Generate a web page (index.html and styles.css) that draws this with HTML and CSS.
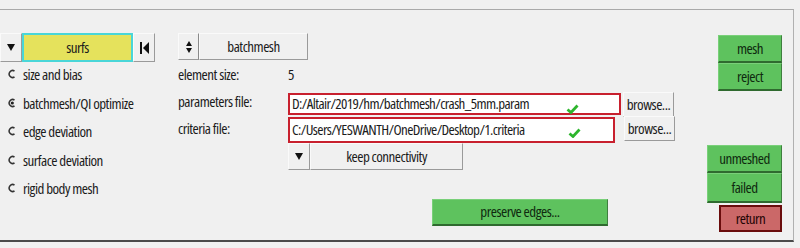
FILE: index.html
```html
<!DOCTYPE html>
<html>
<head>
<meta charset="utf-8">
<link rel="stylesheet" href="styles.css">
</head>
<body>
<div class="panel">
  <div class="col-left">
    <div class="entity-row">
      <button class="btn icon-btn"><svg width="8" height="8" viewBox="0 0 8 8"><polygon points="0,0 8,0 4,7" fill="#111"/></svg></button>
      <div class="entity-field">surfs</div>
      <button class="btn icon-btn"><svg width="9" height="12" viewBox="0 0 9 12"><rect x="0" y="0" width="2" height="12" fill="#111"/><polygon points="9,0 9,12 3,6" fill="#111"/></svg></button>
    </div>
    <ul class="radios">
      <li><span class="radio"><svg width="8" height="10" viewBox="0 0 8 10"><path d="M6.5 2 A3.5 3.5 0 1 0 6.5 8" fill="none" stroke="#333" stroke-width="1.5"/></svg></span>size and bias</li>
      <li><span class="radio"><svg width="8" height="10" viewBox="0 0 8 10"><path d="M6.5 2 A3.5 3.5 0 1 0 6.5 8" fill="none" stroke="#333" stroke-width="1.5"/><circle cx="4.3" cy="5" r="1.6" fill="#222"/></svg></span>batchmesh/QI optimize</li>
      <li><span class="radio"><svg width="8" height="10" viewBox="0 0 8 10"><path d="M6.5 2 A3.5 3.5 0 1 0 6.5 8" fill="none" stroke="#333" stroke-width="1.5"/></svg></span>edge deviation</li>
      <li><span class="radio"><svg width="8" height="10" viewBox="0 0 8 10"><path d="M6.5 2 A3.5 3.5 0 1 0 6.5 8" fill="none" stroke="#333" stroke-width="1.5"/></svg></span>surface deviation</li>
      <li><span class="radio"><svg width="8" height="10" viewBox="0 0 8 10"><path d="M6.5 2 A3.5 3.5 0 1 0 6.5 8" fill="none" stroke="#333" stroke-width="1.5"/></svg></span>rigid body mesh</li>
    </ul>
  </div>

  <div class="col-mid">
    <div class="mode-row">
      <button class="btn updown-btn"><svg width="6" height="12" viewBox="0 0 6 12"><polygon points="0,5 3,0 6,5" fill="#111"/><polygon points="0,7 6,7 3,12" fill="#111"/></svg></button>
      <button class="btn mode-btn">batchmesh</button>
    </div>
    <div class="form">
      <div class="label">element size:</div>
      <div class="value">5</div>
      <div class="label">parameters file:</div>
      <div class="file-row">
        <div class="file-field w1"><span class="path">D:/Altair/2019/hm/batchmesh/crash_5mm.param</span><svg class="check" width="13" height="10" viewBox="0 0 13 10"><path d="M1.5 5.5 L5 8.5 L11.5 1.5" fill="none" stroke="#2db52d" stroke-width="2.8"/></svg></div>
        <button class="btn browse-btn">browse...</button>
      </div>
      <div class="label">criteria file:</div>
      <div class="file-row">
        <div class="file-field w2"><span class="path">C:/Users/YESWANTH/OneDrive/Desktop/1.criteria</span><svg class="check" width="13" height="10" viewBox="0 0 13 10"><path d="M1.5 5.5 L5 8.5 L11.5 1.5" fill="none" stroke="#2db52d" stroke-width="2.8"/></svg></div>
        <button class="btn browse-btn b2">browse...</button>
      </div>
      <div></div>
      <div class="conn-row">
        <button class="btn icon-btn small"><svg width="8" height="8" viewBox="0 0 8 8"><polygon points="0,0 8,0 4,7" fill="#111"/></svg></button>
        <button class="btn conn-btn">keep connectivity</button>
      </div>
      <div></div>
      <div class="preserve-row">
        <button class="gbtn preserve-btn">preserve edges...</button>
      </div>
    </div>
  </div>

  <div class="col-right">
    <button class="gbtn rbtn narrow">mesh</button>
    <button class="gbtn rbtn narrow">reject</button>
    <div class="spacer"></div>
    <button class="gbtn rbtn wide">unmeshed</button>
    <button class="gbtn rbtn wide tall">failed</button>
    <button class="rbtn return-btn">return</button>
  </div>
</div>
</body>
</html>
```

FILE: styles.css
```css
* { box-sizing: border-box; }
html, body {
  margin: 0;
  background: #f0f0f0;
}
body {
  font-family: "Open Sans", "DejaVu Sans", sans-serif;
  font-stretch: 75%;
  font-size: 15px;
  letter-spacing: -0.5px;
  color: #1c1c1c;
}
button {
  font: inherit;
  letter-spacing: inherit;
  color: inherit;
  margin: 0;
  padding: 0;
}
.panel {
  margin-top: 9px;
  width: 794px;
  height: 233px;
  border-top: 1px solid #a9a9a9;
  border-right: 1px solid #b0b0b0;
  border-bottom: 2px solid #4a4a4a;
  display: flex;
  padding-top: 23px;
}
.btn {
  background: #f0f0f0;
  border: 1px solid;
  border-color: #fafafa #9a9a9a #9a9a9a #fafafa;
  display: flex;
  align-items: center;
  justify-content: center;
}
.col-left {
  width: 155px;
  flex-shrink: 0;
}
.entity-row {
  display: flex;
  height: 29px;
}
.icon-btn {
  width: 22px;
  height: 100%;
}
.entity-field {
  width: 111px;
  background: #e5e25c;
  border: 2px solid #49d6d8;
  display: flex;
  align-items: center;
  justify-content: center;
  padding-bottom: 2px;
}
.radios {
  list-style: none;
  margin: 0;
  padding: 0;
  margin-top: -1px;
}
.radios li {
  height: 28.5px;
  display: flex;
  align-items: center;
  padding-left: 8px;
  padding-bottom: 2px;
}
.radio {
  width: 15px;
  display: flex;
  align-items: center;
}
.radio svg { display: block; }

.col-mid {
  margin-left: 23px;
  width: 496px;
  flex-shrink: 0;
}
.mode-row {
  display: flex;
  height: 27px;
}
.updown-btn {
  width: 21px;
  border-right-color: #8a8a8a;
}
.mode-btn {
  width: 109px;
  padding-bottom: 2px;
}
.form {
  display: grid;
  grid-template-columns: 110px 1fr;
  grid-template-rows: 28px 26px 28px 27px 56px;
  margin-top: 1px;
}
.label, .value {
  display: flex;
  align-items: center;
  padding-bottom: 2px;
}
.file-row {
  display: flex;
  align-items: stretch;
}
.file-field {
  border: 2px solid #c8202e;
  background: #fff;
  display: flex;
  align-items: center;
  padding-left: 2px;
  position: relative;
}
.w1 { width: 333px; margin-top: 4px; }
.w2 { width: 327px; margin-top: 2px; }
.path {
  flex: 1;
  padding-bottom: 2px;
  letter-spacing: -0.6px;
}
.check {
  position: absolute;
  right: 40px;
  top: 9px;
}
.w2 .check { right: 32px; }
.browse-btn {
  width: 51px;
  height: 25px;
  margin-left: 2px;
  margin-top: 3px;
  padding-bottom: 2px;
}
.b2 { margin-left: 9px; margin-top: 1px; }
.conn-row {
  display: flex;
  height: 27px;
}
.icon-btn.small { width: 22px; }
.conn-btn {
  width: 153px;
  padding-bottom: 2px;
}
.preserve-row {
  padding-top: 29px;
  padding-left: 144px;
}
.gbtn {
  background: #5ec25e;
  border: 1px solid;
  border-color: #79d079 #3f7f3f #2f6a2f #79d079;
  border-bottom-width: 2px;
  color: #0f2a0f;
  display: flex;
  align-items: center;
  justify-content: center;
  padding-bottom: 2px;
}
.preserve-btn {
  width: 176px;
  height: 27px;
}
.col-right {
  margin-left: auto;
  margin-right: 11px;
  margin-top: 2px;
  display: flex;
  flex-direction: column;
  align-items: flex-end;
}
.rbtn { height: 28px; }
.narrow { width: 64px; height: 28px; }
.wide { width: 75px; }
.tall { height: 30px; }
.spacer { height: 54px; }
.return-btn {
  width: 63px;
  height: 27px;
  margin-top: 2px;
  background: #cb6868;
  border: 2px solid #6a0c0c;
  color: #1f0505;
  display: flex;
  align-items: center;
  justify-content: center;
  padding-bottom: 2px;
}
```
